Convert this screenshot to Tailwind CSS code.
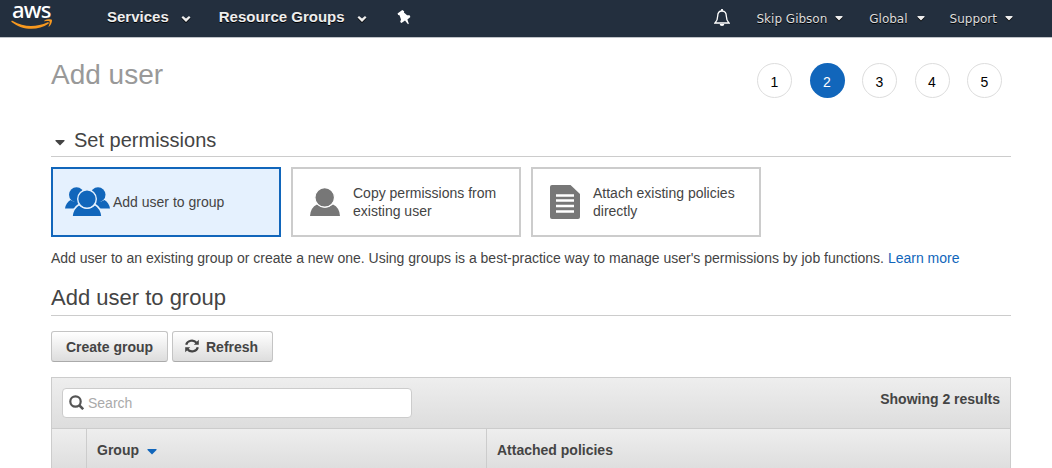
<!DOCTYPE html>
<html lang="en">
<head>
<meta charset="utf-8">
<title>Add user</title>
<script src="https://cdn.jsdelivr.net/npm/@tailwindcss/browser@4"></script>
</head>
<body class="h-[468px] overflow-hidden bg-white font-['Liberation_Sans',Arial,sans-serif] text-sm leading-[18px] text-[#444]">
<header class="flex h-[38px] items-start border-b border-[#bfc3c8] bg-[#232f3e] text-[#eee] [text-shadow:0_1px_0_#000]">
  <div class="ml-[11px] h-[37px] w-[42px] shrink-0 [text-shadow:none]">
    <div class="h-[18px] pl-px font-['Noto_Sans','Open_Sans',sans-serif] text-[22px] leading-[18px] font-medium tracking-[-0.8px] text-white">aws</div>
    <svg class="block" width="42" height="12" viewBox="0 0 42 12" fill="#f7981f"><path d="M.4 3.2C.7 2.7 1.2 2.8 1.8 3.1C13 9.5 25 9.500 36.700 4.300C37.800 3.900 38.400 4.900 37.400 5.700C27 13 11.500 12.700.6 4C.3 3.700.2 3.500.4 3.200Z"/><path d="M33.200 2.700C35.300 1.100 40 .8 40.800 1.800C41.500 3 40.200 7 38.200 8.600C37.700 9 37.400 8.700 37.600 8.200C38.200 6.800 39.100 4.200 38.600 3.500C38 2.900 35.200 3.100 33.700 3.300C33.100 3.300 32.900 3 33.200 2.700Z"/></svg>
  </div>
  <nav class="ml-[54px] flex h-[34px] items-center text-[15px] font-bold">
    <span>Services</span>
    <svg class="mt-[3px] ml-3 drop-shadow-[0_1px_0_#000]" width="10" height="6" viewBox="0 0 10 6" fill="#eee"><path d="M.5 1.500L2 0l3 2.500L8 0l1.500 1.500L5 6Z"/></svg>
    <span class="ml-[28px]">Resource Groups</span>
    <svg class="mt-[3px] ml-3 drop-shadow-[0_1px_0_#000]" width="10" height="6" viewBox="0 0 10 6" fill="#eee"><path d="M.5 1.500L2 0l3 2.500L8 0l1.500 1.500L5 6Z"/></svg>
    <svg class="-mt-px ml-[30px]" width="14" height="16" viewBox="0 0 14 16" fill="#fff"><path d="M.5 4.500L5.300 1l1.900 1.200-.3 1.400 3.200 2.700 2.500 0 .8 1.800-3 2.300 1.400 4.300-.8.5-3-3.600-3.500 2.500-1.300-1.200.8-2.500-1.500-4.100-1.300-.2Z"/></svg>
  </nav>
  <nav class="ml-auto flex h-[37px] items-center pr-[39px] font-['DejaVu_Sans',sans-serif] text-xs text-[#ddd]">
    <svg class="mr-[27px] -mt-0.5" width="16" height="18" viewBox="0 0 16 18" fill="none" stroke="#fff" stroke-width="1.300"><path d="M8 2C5 2 3.700 4.200 3.700 7c0 3.300-.7 5-2.700 7h14c-2-2-2.700-3.700-2.700-7C12.300 4.200 11 2 8 2Z"/><path d="M8 0v2" stroke-width="1.800"/><path d="M5.700 15h4.600a2.300 2 0 0 1-4.600 0Z" fill="#fff" stroke="none"/></svg>
    <span>Skip Gibson</span>
    <svg class="ml-2 -mt-px drop-shadow-[0_1px_0_#000]" width="8" height="5" viewBox="0 0 8 5" fill="#eee"><path d="M.5 0h7v1L4 4.500.5 1z"/></svg>
    <span class="ml-[26px]">Global</span>
    <svg class="ml-[9px] -mt-px drop-shadow-[0_1px_0_#000]" width="8" height="5" viewBox="0 0 8 5" fill="#eee"><path d="M.5 0h7v1L4 4.500.5 1z"/></svg>
    <span class="ml-[25px]">Support</span>
    <svg class="ml-[8px] -mt-px drop-shadow-[0_1px_0_#000]" width="8" height="5" viewBox="0 0 8 5" fill="#eee"><path d="M.5 0h7v1L4 4.500.5 1z"/></svg>
  </nav>
</header>
<main class="ml-[51px] w-[960px]">
  <div class="flex h-[86px] items-start justify-between pr-[9px]">
    <h1 class="pt-[20px] text-[28px] leading-[34px] text-[#999]">Add user</h1>
    <ol class="flex gap-[17.500px] pt-[25px] text-black">
      <li class="flex h-[35px] w-[35px] items-center justify-center rounded-full border border-[#ddd] pt-0.5">1</li>
      <li class="flex h-[35px] w-[35px] items-center justify-center rounded-full bg-[#1166bb] pt-0.5 text-white">2</li>
      <li class="flex h-[35px] w-[35px] items-center justify-center rounded-full border border-[#ddd] pt-0.5">3</li>
      <li class="flex h-[35px] w-[35px] items-center justify-center rounded-full border border-[#ddd] pt-0.5">4</li>
      <li class="flex h-[35px] w-[35px] items-center justify-center rounded-full border border-[#ddd] pt-0.5">5</li>
    </ol>
  </div>
  <h2 class="flex h-[33px] items-center border-b border-[#ccc] text-xl">
    <svg class="mt-[5px] mr-[9px] ml-1" width="10" height="6" viewBox="0 0 10 6" fill="#444"><path d="M.5 0h9v1L5 5.500.5 1z"/></svg>Set permissions
  </h2>
  <div class="mt-[10px] flex gap-[10px]">
    <div class="flex h-[70px] w-[230px] items-center border-2 border-[#1166bb] bg-[#e5f1fe] pl-3">
      <svg class="-mt-px mr-[3px] shrink-0" width="45" height="29" viewBox="0 0 45 29" fill="#1166bb"><circle cx="11.500" cy="7.700" r="7.500"/><circle cx="33" cy="7.700" r="7.500"/><path d="M0 21.500Q1 15.500 5.500 13Q11 17 17 13v8.500ZM45 21.500Q44 15.500 39.500 13Q33 17 27 13v8.500Z"/><path d="M7 29.800Q7.500 21.500 14 17.500Q22 25 30 17.500Q36.500 21.500 37 29.800Z" stroke="#e5f1fe" stroke-width="1.500"/><circle cx="22" cy="12" r="9.300" stroke="#e5f1fe" stroke-width="1.400"/></svg>
      <span>Add user to group</span>
    </div>
    <div class="flex h-[70px] w-[230px] items-center border-2 border-[#ccc] pl-[17px]">
      <svg class="mr-[13px] shrink-0" width="30" height="28" viewBox="0 0 30 28" fill="#777"><path d="M0 28Q.5 19.500 7 16.500Q15 23 23 16.500Q29.500 19.500 30 28Z"/><circle cx="14.700" cy="9.400" r="9.800" stroke="#fff" stroke-width="1.200"/></svg>
      <span>Copy permissions from<br>existing user</span>
    </div>
    <div class="flex h-[70px] w-[230px] items-center border-2 border-[#ccc] pl-[17px]">
      <svg class="mr-[13px] shrink-0" width="30" height="34" viewBox="0 0 30 34"><path d="M2 0h18.500L30 9v23a2 2 0 0 1-2 2H2a2 2 0 0 1-2-2V2A2 2 0 0 1 2 0Z" fill="#777"/><path d="M6 10.500h18M6 15.500h18M6 21h18M6 26.500h18" stroke="#fff" stroke-width="2.600"/></svg>
      <span>Attach existing policies<br>directly</span>
    </div>
  </div>
  <p class="mt-[12px] whitespace-nowrap">Add user to an existing group or create a new one. Using groups is a best-practice way to manage user's permissions by job functions. <a class="text-[#1166bb]">Learn more</a></p>
  <h2 class="mt-[13px] flex h-[36px] items-center border-b border-[#ccc] text-[22px]">Add user to group</h2>
  <div class="mt-[15px] flex gap-1 font-bold [text-shadow:0_1px_0_#fff]">
    <button class="flex h-[31px] w-[117px] items-center justify-center rounded-[3px] border border-[#c4c4c4] border-b-[#aaa] bg-linear-to-b from-white to-[#ddd]">Create group</button>
    <button class="flex h-[31px] w-[101px] items-center rounded-[3px] border border-[#c4c4c4] border-b-[#aaa] bg-linear-to-b from-white to-[#ddd] pl-3">
      <svg class="-mt-0.5 mr-[7px]" width="14" height="14" viewBox="0 0 14 14" fill="none" stroke="#444" stroke-width="2.200"><path d="M1.200 5.800A5.800 5.300 0 0 1 11.500 3.700M12.800 8.200A5.800 5.300 0 0 1 2.500 10.300"/><path d="M13.800.8v5H8.800ZM.2 13.200v-5h5Z" fill="#444" stroke="none"/></svg>Refresh
    </button>
  </div>
  <section class="mt-[15px] border border-b-0 border-[#ccc]">
    <div class="flex h-[51px] items-start justify-between border-b border-[#ccc] bg-linear-to-b from-[#eee] to-[#ddd] px-[10px] pt-[10px]">
      <div class="flex h-[30px] w-[350px] items-center rounded-[4px] border border-[#ccc] bg-white pl-[6px] text-[#aaa]">
        <svg class="-mt-0.5 mr-[4px]" width="15" height="15" viewBox="0 0 15 15" fill="none" stroke="#555"><circle cx="6.500" cy="6.500" r="5.200" stroke-width="2.200"/><path d="M10 10l4.200 4.200" stroke-width="2.500"/></svg>Search
      </div>
      <strong class="pt-[2px]">Showing 2 results</strong>
    </div>
    <div class="grid h-[42px] grid-cols-[35px_400px_1fr] bg-linear-to-b from-[#eee] to-[#ddd] font-bold">
      <div class="border-r border-[#ccc]"></div>
      <div class="flex items-center border-r border-[#ccc] pl-[10px]">Group<svg class="mt-[3px] ml-2" width="10" height="6" viewBox="0 0 10 6" fill="#1166bb"><path d="M.5 0h9v1L5 5.500.5 1z"/></svg></div>
      <div class="flex items-center pl-[10px]">Attached policies</div>
    </div>
  </section>
</main>
</body>
</html>
